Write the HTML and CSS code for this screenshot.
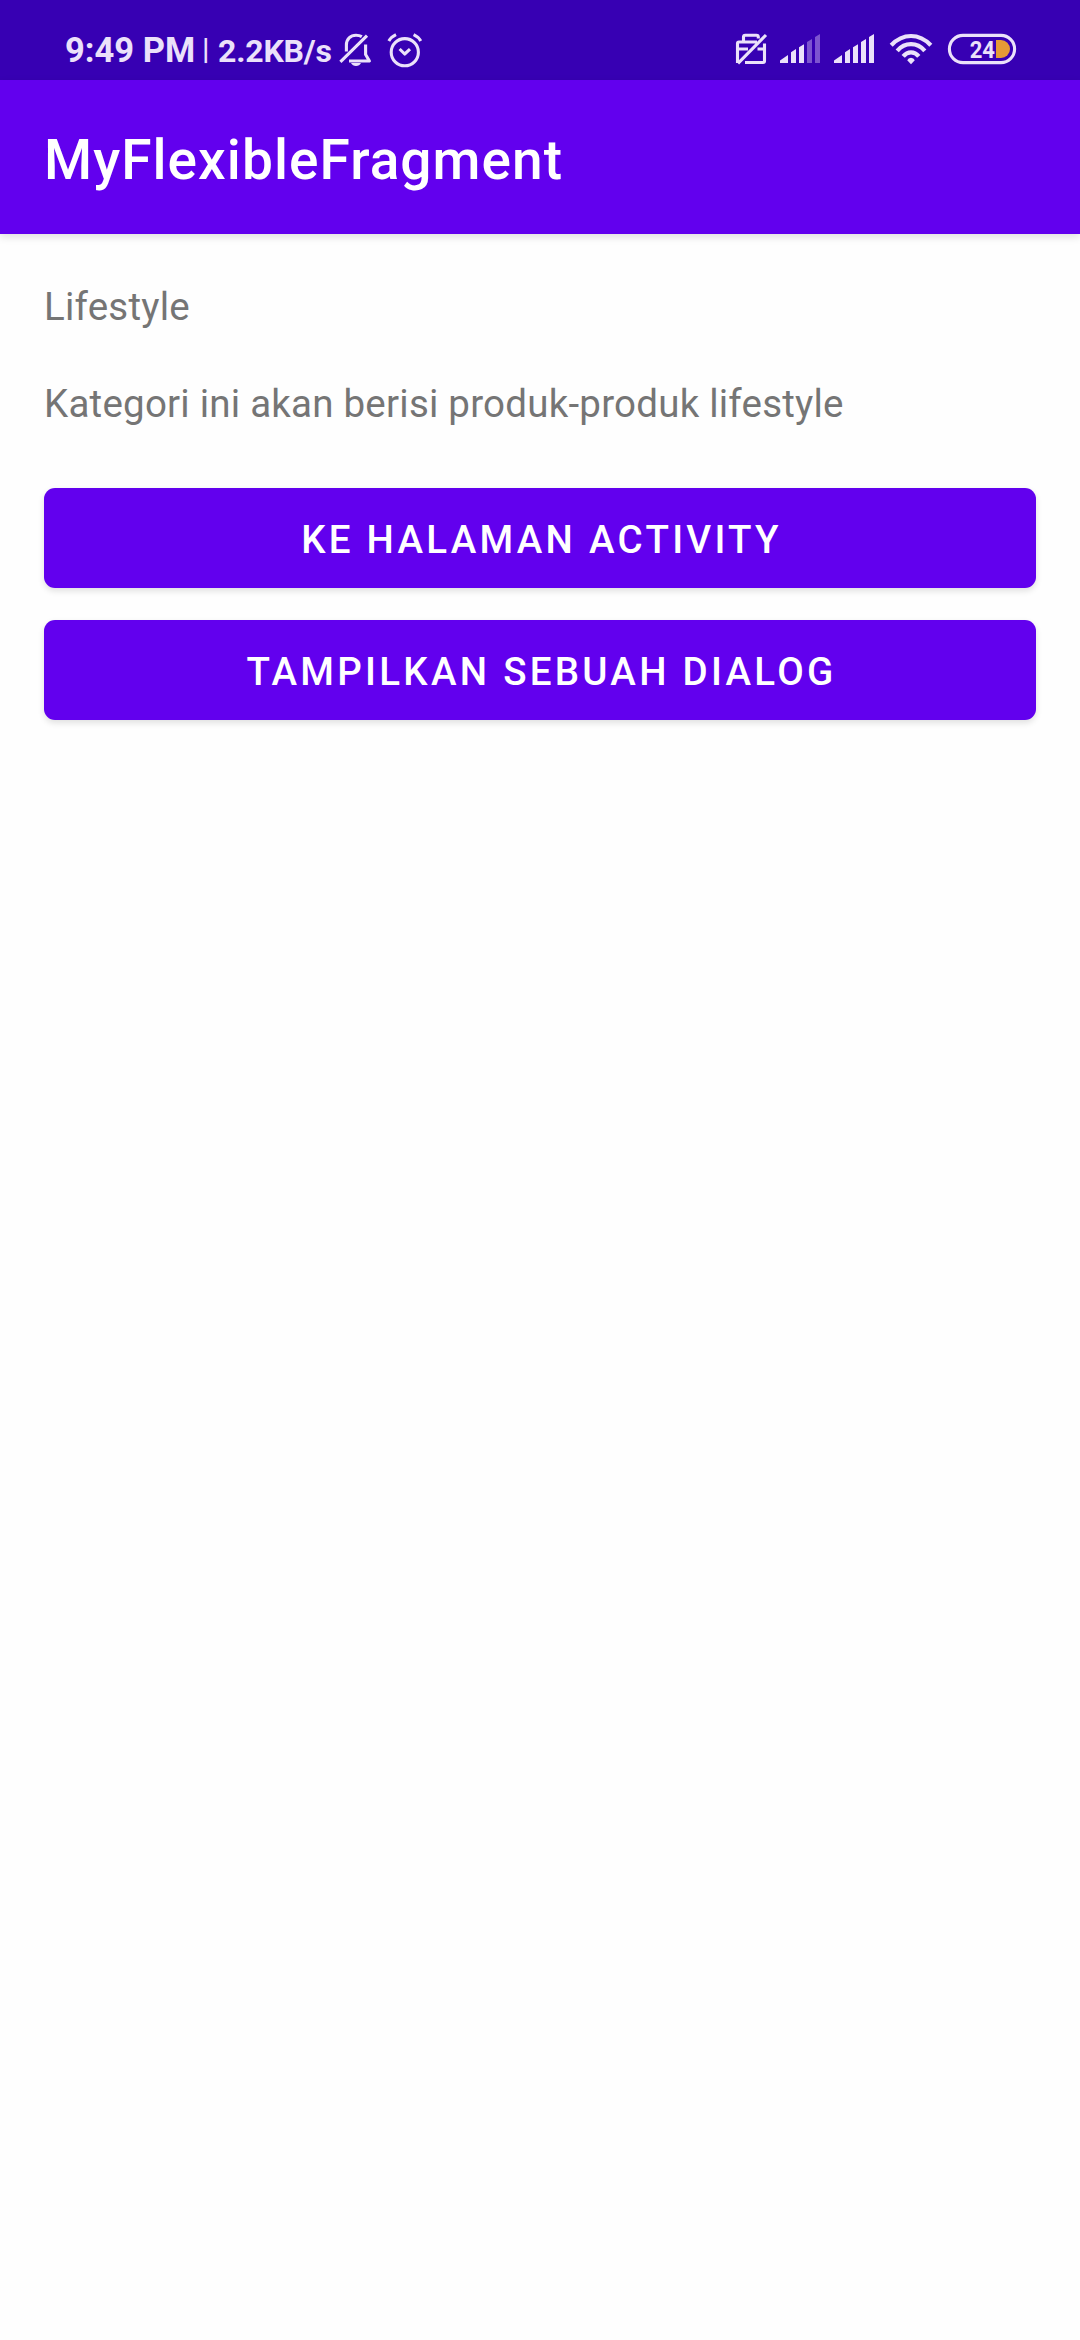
FILE: index.html
```html
<!DOCTYPE html>
<html lang="id">
<head>
<meta charset="utf-8">
<title>MyFlexibleFragment</title>
<link rel="stylesheet" href="styles.css">
</head>
<body>
<header class="status">
  <span class="clock">9:49 PM</span>
  <span class="divider">|</span>
  <span class="speed">2.2KB/s</span>
  <svg class="icon bell" width="34" height="36" viewBox="338 32 34 36">
    <path class="line" d="M346.4 51.5V45C346.4 39 350.5 35.2 356 35.2Q359.5 35.2 361.8 36.6M340.4 61.9L367 35.6M365.6 44.5V54.5L369.4 61H349"/>
    <path class="solid" d="M351 63H361Q359.5 66 356 66T351 63Z"/>
  </svg>
  <svg class="icon alarm" width="36" height="36" viewBox="387 32 36 36">
    <circle class="line" cx="404.8" cy="52.2" r="13.6"/>
    <path class="line" d="M388.8 41Q391 37 396 34.6M413.6 34.6Q418.6 37 420.8 41M399.6 49L404.7 54L410 49.2"/>
  </svg>
  <svg class="icon sim" width="34" height="34" viewBox="734 32 34 34">
    <path class="line" d="M737.5 63V43.5Q737.5 42 739 42H757M743.5 42V37Q743.5 35.2 745.3 35.2H756.5Q758.3 35.2 758.3 37V38.5M738 49H748M757.5 49H764M764.5 43.5V61Q764.5 62.5 763 62.5H745M738 63.3L766 35"/>
  </svg>
  <svg class="icon signal" width="40" height="30" viewBox="0 0 40 30">
    <path class="solid" d="M0 29V26.5L8 21V29ZM11 29V18.2L16 15V29ZM19 29V13.2L24 10.3V29Z"/>
    <path class="solid faint" d="M27 29V8L32 5V29ZM35 29V3L40 0V29Z"/>
  </svg>
  <svg class="icon signal-full" width="40" height="30" viewBox="0 0 40 30">
    <path class="solid" d="M0 29V26.5L8 21V29ZM11 29V18.2L16 15V29ZM19 29V13.2L24 10.3V29ZM27 29V8L32 5V29ZM35 29V3L40 0V29Z"/>
  </svg>
  <svg class="icon wifi" width="44" height="32" viewBox="889 33 44 32">
    <path class="arc" d="M891.2 45.2Q900 36 911 36T930.8 45.2M897.2 50.8Q903 44.1 911 44.1T924.8 50.8M903.2 56.4Q906.5 52.3 911 52.3T918.8 56.4"/>
    <path class="solid" d="M907.2 60.3Q908.3 57.8 911 57.8T914.8 60.3L911 64.2Z"/>
  </svg>
  <svg class="icon battery" width="68" height="30" viewBox="0 0 68 30">
    <rect class="line" x="1.4" y="1.4" width="65.2" height="27.2" rx="13.6"/>
    <path class="charge" d="M48 6H53A9 9 0 0 1 53 24H48Z"/>
    <text class="percent" x="21.7" y="23.8" textLength="25.3" lengthAdjust="spacingAndGlyphs">24</text>
  </svg>
</header>
<div class="appbar"><h1 class="title">MyFlexibleFragment</h1></div>
<main class="content">
  <p class="text">Lifestyle</p>
  <p class="text">Kategori ini akan berisi produk-produk lifestyle</p>
  <div class="actions">
    <button class="button">KE HALAMAN ACTIVITY</button>
    <button class="button">TAMPILKAN SEBUAH DIALOG</button>
  </div>
</main>
</body>
</html>
```
FILE: styles.css
```css
* { box-sizing: border-box; }
body {
  margin: 0;
  min-height: 2340px;
  background: #fefefe;
  font-family: Roboto, sans-serif;
}
.status {
  display: flex;
  height: 80px;
  padding-left: 65px;
  background: #3700b3;
  color: #ebe1fa;
  white-space: nowrap;
}
.clock, .divider, .speed { flex: none; line-height: 40px; }
.clock { width: 137px; padding-top: 30px; font-size: 34.5px; font-weight: 700; }
.divider { width: 16px; padding-top: 29px; font-size: 30px; font-weight: 500; }
.speed { width: 120px; padding-top: 31px; font-size: 32px; font-weight: 700; letter-spacing: -.2px; }
.icon { flex: none; display: block; overflow: visible; }
.bell { margin-top: 32px; }
.alarm { margin: 32px 0 0 15px; }
.sim { margin: 32px 0 0 311px; }
.signal { margin: 34px 0 0 12px; }
.signal-full { margin: 34px 0 0 14px; }
.wifi { margin: 33px 0 0 15px; }
.battery { margin: 34px 0 0 15px; }
.line {
  fill: none;
  stroke: #ebe1fa;
  stroke-width: 3.1;
  stroke-linejoin: round;
}
.arc { fill: none; stroke: #ebe1fa; stroke-width: 4.2; }
.solid { fill: #ebe1fa; }
.faint { fill: #7d54cf; }
.charge { fill: #e59a36; }
.percent { fill: #ebe1fa; font-size: 24.5px; font-weight: 700; }
.appbar {
  position: relative;
  display: flex;
  align-items: center;
  height: 154px;
  padding: 6px 44px 0;
  background: #6200ee;
  box-shadow: 0 3px 8px rgba(0, 0, 0, .12);
}
.title {
  margin: 0;
  color: #fff;
  font-size: 55px;
  font-weight: 500;
  letter-spacing: 1.06px;
}
.content {
  display: flex;
  flex-direction: column;
  gap: 44px;
  padding: 46px 44px;
}
.text {
  margin: 0;
  color: #757575;
  font-size: 38.5px;
  line-height: 53px;
  letter-spacing: .23px;
}
.actions { display: flex; flex-direction: column; gap: 32px; padding-top: 14px; }
.button {
  height: 100px;
  padding: 2px 0 0 3px;
  border: 0;
  border-radius: 11px;
  background: #6200ee;
  box-shadow: 0 3px 6px rgba(0, 0, 0, .12);
  color: #fff;
  font: 500 38.5px Roboto, sans-serif;
  letter-spacing: 3.27px;
}
```
